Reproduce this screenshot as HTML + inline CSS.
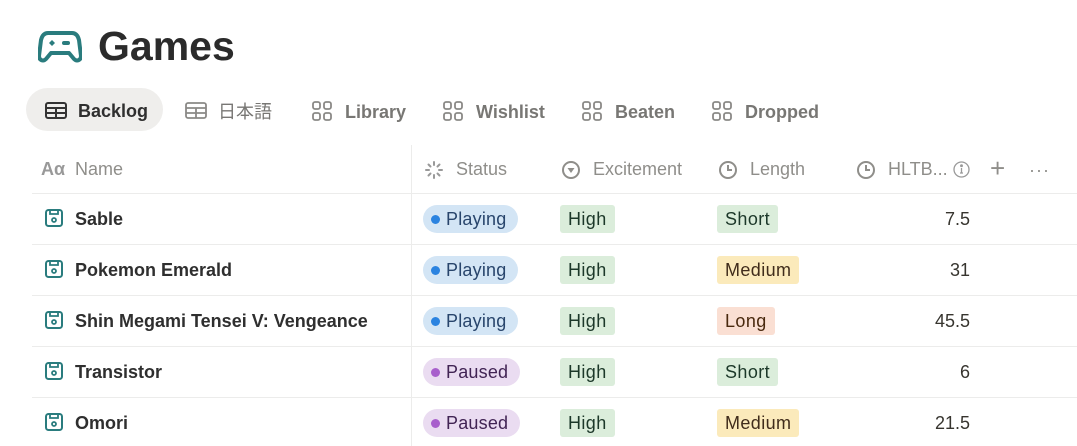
<!DOCTYPE html>
<html><head><meta charset="utf-8"><style>
body{margin:0;width:1077px;height:446px;overflow:hidden;background:#fff;font-family:"Liberation Sans","Noto Sans CJK JP",sans-serif;color:#37352f;position:relative}
.a{position:absolute;white-space:nowrap}
.title{left:98px;top:23px;font-size:41px;font-weight:bold;color:#2b2b2b}
.tab{top:94px;height:36px;line-height:36px;font-size:18px;color:#787774;font-weight:bold}
.hd{top:159px;font-size:18px;color:#8f8e8a}
.hline{position:absolute;left:32px;right:0;height:1px;background:#ececeb}
.name{font-size:18px;font-weight:bold;color:#2f2f2f;left:75px}
.pill{font-size:18px;height:28px;line-height:28px;padding:0 12px 0 8px;border-radius:14px;letter-spacing:.2px}
.tag{font-size:18px;height:28px;line-height:28px;padding:0 8px;border-radius:3px;letter-spacing:.4px}
.dot{display:inline-block;width:9px;height:9px;border-radius:50%;margin-right:6px;vertical-align:1px}
.num{font-size:18px;right:107px;color:#37352f}
</style></head><body>
<svg class="a" style="left:38px;top:30px" width="44" height="34" viewBox="0 0 44 34"><path d="M10 3h24c4 0 6 3 7 7l2 16c0 4-4 6-7 3l-5-6H13l-5 6c-3 3-7 1-7-3l2-16c1-4 3-7 7-7z" fill="none" stroke="#2a7c7e" stroke-width="4" stroke-linejoin="round"/><path d="M14 10l3 3-3 3-3-3z" fill="#2a7c7e"/><rect x="24" y="11" width="8" height="4" rx="2" fill="#2a7c7e"/></svg>
<div class="a title">Games</div>
<div class="a" style="left:26px;top:88px;width:137px;height:43px;border-radius:22px;background:#efeeec"></div>
<svg class="a" style="left:45px;top:102px" width="22" height="17"><rect x="1" y="1" width="20" height="15" rx="2" fill="none" stroke="#333" stroke-width="2"/><path d="M1 6h20M1 11h20M11 6v10" stroke="#333" stroke-width="2"/></svg>
<div class="a tab" style="left:78px;top:93px;color:#2f2f2f">Backlog</div>
<svg class="a" style="left:185px;top:102px" width="22" height="17"><rect x="1" y="1" width="20" height="15" rx="2" fill="none" stroke="#8a8986" stroke-width="1.8"/><path d="M1 6h20M1 11h20M11 6v10" stroke="#8a8986" stroke-width="1.8"/></svg>
<div class="a tab" style="left:218px;font-weight:normal">日本語</div>
<svg class="a" style="left:312px;top:101px" width="20" height="20" fill="none" stroke="#8a8986" stroke-width="1.8"><rect x="1" y="1" width="7" height="7" rx="2"/><rect x="12" y="1" width="7" height="7" rx="2"/><rect x="1" y="12" width="7" height="7" rx="2"/><rect x="12" y="12" width="7" height="7" rx="2"/></svg>
<div class="a tab" style="left:345px">Library</div>
<svg class="a" style="left:443px;top:101px" width="20" height="20" fill="none" stroke="#8a8986" stroke-width="1.8"><rect x="1" y="1" width="7" height="7" rx="2"/><rect x="12" y="1" width="7" height="7" rx="2"/><rect x="1" y="12" width="7" height="7" rx="2"/><rect x="12" y="12" width="7" height="7" rx="2"/></svg>
<div class="a tab" style="left:476px">Wishlist</div>
<svg class="a" style="left:582px;top:101px" width="20" height="20" fill="none" stroke="#8a8986" stroke-width="1.8"><rect x="1" y="1" width="7" height="7" rx="2"/><rect x="12" y="1" width="7" height="7" rx="2"/><rect x="1" y="12" width="7" height="7" rx="2"/><rect x="12" y="12" width="7" height="7" rx="2"/></svg>
<div class="a tab" style="left:615px">Beaten</div>
<svg class="a" style="left:712px;top:101px" width="20" height="20" fill="none" stroke="#8a8986" stroke-width="1.8"><rect x="1" y="1" width="7" height="7" rx="2"/><rect x="12" y="1" width="7" height="7" rx="2"/><rect x="1" y="12" width="7" height="7" rx="2"/><rect x="12" y="12" width="7" height="7" rx="2"/></svg>
<div class="a tab" style="left:745px">Dropped</div>

<div class="a" style="left:411px;top:145px;width:1px;height:301px;background:#ececeb"></div>
<div class="a hd" style="left:41px;font-weight:bold;color:#999">Aα</div>
<div class="a hd" style="left:75px">Name</div>
<svg class="a" style="left:424px;top:160px" width="20" height="20" stroke="#999" stroke-width="2" stroke-linecap="round"><path d="M10 2v3M10 15v3M2 10h3M15 10h3M4.5 4.5l2 2M13.5 13.5l2 2M4.5 15.5l2-2M13.5 6.5l2-2"/></svg>
<div class="a hd" style="left:456px">Status</div>
<svg class="a" style="left:561px;top:160px" width="20" height="20"><circle cx="10" cy="10" r="8" fill="none" stroke="#8f8e8a" stroke-width="2"/><path d="M6.5 8h7L10 13z" fill="#8f8e8a"/></svg>
<div class="a hd" style="left:593px">Excitement</div>
<svg class="a" style="left:718px;top:160px" width="20" height="20" fill="none" stroke="#8f8e8a" stroke-width="2"><circle cx="10" cy="10" r="8"/><path d="M10 5v5h4"/></svg>
<div class="a hd" style="left:750px">Length</div>
<svg class="a" style="left:856px;top:160px" width="20" height="20" fill="none" stroke="#8f8e8a" stroke-width="2"><circle cx="10" cy="10" r="8"/><path d="M10 5v5h4"/></svg>
<div class="a hd" style="left:888px">HLTB...</div>
<svg class="a" style="left:953px;top:161px" width="17" height="17" fill="none" stroke="#999" stroke-width="1.3"><circle cx="8.5" cy="8.5" r="7.5"/><path d="M8.5 7v5M7 12h3"/><circle cx="8.5" cy="4.7" r=".8" fill="#999"/></svg>
<div class="a" style="left:990px;top:153px;font-size:26px;color:#8f8e8a">+</div>
<div class="a" style="left:1029px;top:160px;font-size:18px;color:#8f8e8a;letter-spacing:1px">···</div>

<div class="hline" style="top:193px"></div>
<div class="hline" style="top:244px"></div>
<div class="hline" style="top:295px"></div>
<div class="hline" style="top:346px"></div>
<div class="hline" style="top:397px"></div>

<svg width="0" height="0" style="position:absolute"><defs><g id="fl"><rect x="1" y="1" width="16" height="16" rx="2.5" fill="none" stroke="#2a7c7e" stroke-width="2"/><path d="M5 1v4h8V1" fill="none" stroke="#2a7c7e" stroke-width="1.8"/><circle cx="9" cy="11" r="2" fill="none" stroke="#2a7c7e" stroke-width="1.8"/></g></defs></svg>

<svg class="a" style="left:45px;top:209px" width="18" height="18"><use href="#fl"/></svg>
<div class="a name" style="top:209px">Sable</div>
<div class="a pill" style="left:423px;top:205px;background:#d3e5f5;color:#28456c"><span class="dot" style="background:#2b83e0"></span>Playing</div>
<div class="a tag" style="left:560px;top:205px;background:#dbeddb;color:#1c3829">High</div>
<div class="a tag" style="left:717px;top:205px;background:#dbeddb;color:#1c3829">Short</div>
<div class="a num" style="top:209px">7.5</div>

<svg class="a" style="left:45px;top:260px" width="18" height="18"><use href="#fl"/></svg>
<div class="a name" style="top:260px">Pokemon Emerald</div>
<div class="a pill" style="left:423px;top:256px;background:#d3e5f5;color:#28456c"><span class="dot" style="background:#2b83e0"></span>Playing</div>
<div class="a tag" style="left:560px;top:256px;background:#dbeddb;color:#1c3829">High</div>
<div class="a tag" style="left:717px;top:256px;background:#fbeabb;color:#402c1b">Medium</div>
<div class="a num" style="top:260px">31</div>

<svg class="a" style="left:45px;top:311px" width="18" height="18"><use href="#fl"/></svg>
<div class="a name" style="top:311px">Shin Megami Tensei V: Vengeance</div>
<div class="a pill" style="left:423px;top:307px;background:#d3e5f5;color:#28456c"><span class="dot" style="background:#2b83e0"></span>Playing</div>
<div class="a tag" style="left:560px;top:307px;background:#dbeddb;color:#1c3829">High</div>
<div class="a tag" style="left:717px;top:307px;background:#fadfd3;color:#49290e">Long</div>
<div class="a num" style="top:311px">45.5</div>

<svg class="a" style="left:45px;top:362px" width="18" height="18"><use href="#fl"/></svg>
<div class="a name" style="top:362px">Transistor</div>
<div class="a pill" style="left:423px;top:358px;background:#eadcf1;color:#412454"><span class="dot" style="background:#a85fcc"></span>Paused</div>
<div class="a tag" style="left:560px;top:358px;background:#dbeddb;color:#1c3829">High</div>
<div class="a tag" style="left:717px;top:358px;background:#dbeddb;color:#1c3829">Short</div>
<div class="a num" style="top:362px">6</div>

<svg class="a" style="left:45px;top:413px" width="18" height="18"><use href="#fl"/></svg>
<div class="a name" style="top:413px">Omori</div>
<div class="a pill" style="left:423px;top:409px;background:#eadcf1;color:#412454"><span class="dot" style="background:#a85fcc"></span>Paused</div>
<div class="a tag" style="left:560px;top:409px;background:#dbeddb;color:#1c3829">High</div>
<div class="a tag" style="left:717px;top:409px;background:#fbeabb;color:#402c1b">Medium</div>
<div class="a num" style="top:413px">21.5</div>
</body></html>
